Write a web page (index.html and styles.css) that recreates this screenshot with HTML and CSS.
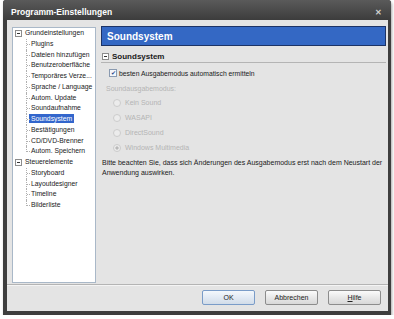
FILE: index.html
```html
<!DOCTYPE html>
<html lang="de">
<head>
    <meta charset="UTF-8">
    <title>Programm-Einstellungen</title>
    <link rel="stylesheet" href="styles.css">
</head>
<body>
    <div class="window">
        <div class="titlebar">
            <span class="title">Programm-Einstellungen</span>
            <span class="close">&#x2715;</span>
        </div>
        <div class="client">
            <div class="main">
                <div class="tree">
                    <div class="root"><span class="box"></span>Grundeinstellungen</div>
                    <div class="children">
                        <div class="leaf">Plugins</div>
                        <div class="leaf">Dateien hinzufügen</div>
                        <div class="leaf">Benutzeroberfläche</div>
                        <div class="leaf">Temporäres Verze...</div>
                        <div class="leaf">Sprache / Language</div>
                        <div class="leaf">Autom. Update</div>
                        <div class="leaf">Soundaufnahme</div>
                        <div class="leaf"><span class="selected">Soundsystem</span></div>
                        <div class="leaf">Bestätigungen</div>
                        <div class="leaf">CD/DVD-Brenner</div>
                        <div class="leaf">Autom. Speichern</div>
                    </div>
                    <div class="root"><span class="box"></span>Steuerelemente</div>
                    <div class="children">
                        <div class="leaf">Storyboard</div>
                        <div class="leaf">Layoutdesigner</div>
                        <div class="leaf">Timeline</div>
                        <div class="leaf">Bilderliste</div>
                    </div>
                </div>
                <div class="panel">
                    <div class="panel-header">Soundsystem</div>
                    <div class="section-title"><span class="box"></span>Soundsystem</div>
                    <label class="check"><span class="checkbox">&#x2714;</span>besten Ausgabemodus automatisch ermitteln</label>
                    <div class="group-label">Soundausgabemodus:</div>
                    <div class="radios">
                        <div class="radio"><span class="dot"></span>Kein Sound</div>
                        <div class="radio"><span class="dot"></span>WASAPI</div>
                        <div class="radio"><span class="dot"></span>DirectSound</div>
                        <div class="radio"><span class="dot on"></span>Windows Multimedia</div>
                    </div>
                    <p class="note">Bitte beachten Sie, dass sich Änderungen des Ausgabemodus erst nach dem Neustart der Anwendung auswirken.</p>
                </div>
            </div>
            <div class="footer">
                <button class="btn default">OK</button>
                <button class="btn">Abbrechen</button>
                <button class="btn"><u>H</u>ilfe</button>
            </div>
        </div>
    </div>
</body>
</html>
```

FILE: styles.css
```css
body {
    margin: 0;
    background-color: #ffffff;
    font-family: 'Liberation Sans', Arial, sans-serif;
    font-size: 7px;
    color: #1a1a1a;
}

.window {
    margin-left: 3px;
    width: 388px;
    height: 315px;
    display: flex;
    flex-direction: column;
    background-color: #3e3e3e;
    border-radius: 3px 3px 0 0;
    box-shadow: 1px 2px 3px rgba(0, 0, 0, 0.35);
}

.titlebar {
    height: 20px;
    flex-shrink: 0;
    display: flex;
    align-items: center;
    justify-content: space-between;
    padding: 0 9px 0 8px;
    background: linear-gradient(#5a5a5a, #3c3c3c);
    border-radius: 3px 3px 0 0;
}

.title {
    color: #ffffff;
    font-weight: bold;
    font-size: 8.5px;
    margin-top: 4px;
}

.close {
    color: #d0d0d0;
    font-size: 8px;
    font-weight: bold;
    margin-top: 4px;
}

.client {
    flex: 1;
    margin: 0 3px 4px 4px;
    background-color: #e4e4e4;
    display: flex;
    flex-direction: column;
}

.main {
    display: flex;
    gap: 5px;
    padding: 6px 2px 0 5px;
    height: 256px;
}

.tree {
    width: 82px;
    height: 254px;
    margin-top: 1px;
    background-color: #ffffff;
    border: 1px solid #a9b8c8;
    font-size: 6.8px;
    overflow: hidden;
}

.root, .leaf {
    height: 10.75px;
    line-height: 10.75px;
    white-space: nowrap;
}

.root {
    display: flex;
    align-items: center;
    padding-left: 2px;
}

.box {
    position: relative;
    flex-shrink: 0;
    width: 5px;
    height: 5px;
    border: 1px solid #8c8c8c;
    background-color: #ffffff;
    margin-right: 3px;
}

.box::after {
    content: "";
    position: absolute;
    left: 1px;
    right: 1px;
    top: 2px;
    border-top: 1px solid #333333;
}

.children {
    margin-left: 13px;
}

.leaf {
    position: relative;
    padding-left: 4px;
    border-left: 1px dotted #b0b0b0;
}

.leaf::before {
    content: "";
    position: absolute;
    left: 0;
    top: 5px;
    width: 3px;
    border-top: 1px dotted #b0b0b0;
}

.children .leaf:last-child {
    border-left-color: transparent;
}

.children .leaf:last-child::after {
    content: "";
    position: absolute;
    left: -1px;
    top: 0;
    height: 6px;
    border-left: 1px dotted #b0b0b0;
}

.selected {
    background-color: #3366cc;
    color: #ffffff;
    padding: 1px 2px;
    margin-left: -2px;
}

.panel {
    flex: 1;
    display: flex;
    flex-direction: column;
}

.panel-header {
    height: 18px;
    line-height: 19px;
    background-color: #3468c4;
    border: 1px solid #1c3366;
    color: #ffffff;
    font-weight: bold;
    font-size: 10px;
    padding-left: 5px;
}

.section-title {
    display: flex;
    align-items: center;
    font-weight: bold;
    font-size: 8px;
    margin-top: 6px;
    padding-left: 1px;
    padding-bottom: 1px;
    border-bottom: 1px solid #b4b4b4;
}

.check {
    display: flex;
    align-items: center;
    margin: 6px 0 0 8px;
    font-size: 6.8px;
}

.checkbox {
    width: 6px;
    height: 6px;
    border: 1px solid #8a9ab0;
    background-color: #f4f6fa;
    color: #2a4a8a;
    font-size: 6px;
    line-height: 6px;
    text-align: center;
    margin-right: 2px;
}

.group-label {
    color: #b4b4b4;
    margin: 8px 0 0 5px;
}

.radios {
    margin: 6px 0 0 12px;
    display: flex;
    flex-direction: column;
    gap: 6px;
}

.radio {
    display: flex;
    align-items: center;
    color: #b4b4b4;
    height: 9px;
}

.dot {
    width: 6px;
    height: 6px;
    border: 1px solid #cccccc;
    border-radius: 50%;
    background-color: #ececec;
    margin-right: 4px;
}

.dot.on {
    background: radial-gradient(#b8b8b8 35%, #ececec 40%);
}

.note {
    margin: 6px 0 0 1px;
    line-height: 10px;
}

.footer {
    margin-top: auto;
    border-top: 1px solid #b4b4b4;
    box-shadow: inset 0 1px 0 #f4f4f4;
    display: flex;
    justify-content: flex-end;
    gap: 10px;
    padding: 5px 7px 6px 0;
}

.btn {
    width: 53px;
    height: 15px;
    padding: 0;
    font-family: 'Liberation Sans', Arial, sans-serif;
    font-size: 7px;
    color: #222;
    border: 1px solid #8c8c8c;
    border-radius: 2px;
    background: linear-gradient(#fbfbfb, #e8e8e8 50%, #d8d8d8);
}

.btn.default {
    border-color: #7a9cc8;
    background: linear-gradient(#f4f8fc, #e2eaf4 50%, #d2dce8);
}
```
